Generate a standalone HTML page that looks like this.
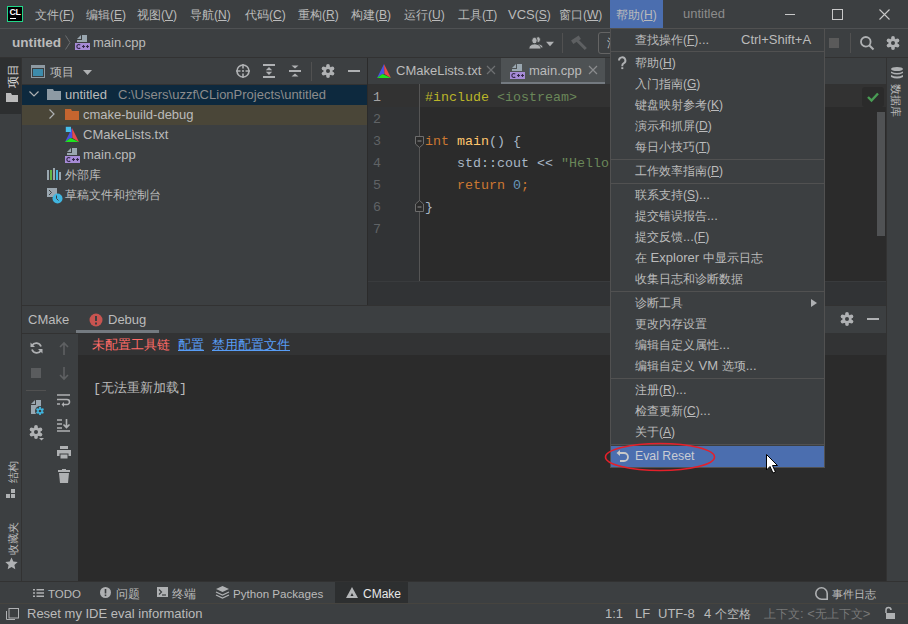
<!DOCTYPE html>
<html><head><meta charset="utf-8">
<style>
*{margin:0;padding:0;box-sizing:border-box}
html,body{width:908px;height:624px;overflow:hidden;background:#3c3f41}
body{position:relative;font-family:"Liberation Sans",sans-serif;font-size:13px;color:#bbbbbb}
.a{position:absolute}
.t{position:absolute;white-space:pre;line-height:16px}
i.k{font-style:normal;font-size:12px}
.m{font-family:"Liberation Mono",monospace;font-size:13.33px}
u{text-decoration:underline;text-underline-offset:1px}
s{text-decoration:none;font-size:12px}
.k13 i.k{font-size:13px}
.k11 i.k{font-size:11px}
svg{position:absolute;overflow:visible}
</style></head><body>
<svg width="0" height="0" style="position:absolute"><defs><g id="gear"><circle cx="7" cy="7" r="4.7"/><circle cx="7" cy="1.9" r="1.9"/><circle cx="11.4" cy="4.45" r="1.9"/><circle cx="11.4" cy="9.55" r="1.9"/><circle cx="7" cy="12.1" r="1.9"/><circle cx="2.6" cy="9.55" r="1.9"/><circle cx="2.6" cy="4.45" r="1.9"/></g><symbol id="cpp" viewBox="0 0 16 15"><path d="M7 0H12V7H2V5H7Z" fill="#9aa7b0"/><path d="M2 4L6 0V4Z" fill="#9aa7b0"/><rect x="0" y="8" width="15" height="7" fill="#a68bd7"/><path d="M5.2 10.2A1.9 2 0 1 0 5.2 12.8" stroke="#35294a" stroke-width="1.1" fill="none"/><path d="M7 11.5H10M8.5 10V13M11 11.5H14M12.5 10V13" stroke="#35294a" stroke-width="1.1"/></symbol><symbol id="cmk" viewBox="0 0 16 16"><path d="M7 2L0 16L5.5 12L7.5 12Z" fill="#4a52e0"/><path d="M7 2L7.5 12L14 16Z" fill="#e74a4a"/><path d="M0 16L5.5 12L14 16Z" fill="#1ee41e"/></symbol></defs></svg>

<!-- ===== title bar ===== -->
<div class="a" style="left:0;top:0;width:908px;height:28px;background:#3c3f41"></div>
<div class="a" style="left:0;top:28px;width:908px;height:1px;background:#4f5153"></div>
<!-- CL logo -->
<div class="a" style="left:7px;top:6px;width:16px;height:16px;background:#000;border:1px solid #21d789"></div>
<div class="t" style="left:9.5px;top:6.5px;font-size:8.8px;font-weight:bold;color:#fff;line-height:10px;letter-spacing:-0.4px">CL</div>
<div class="a" style="left:10px;top:18px;width:6px;height:1px;background:#fff"></div>
<!-- menus -->
<div class="t" style="left:35px;top:7px"><i class="k">文件</i><s>(<u>F</u>)</s></div>
<div class="t" style="left:86px;top:7px"><i class="k">编辑</i><s>(<u>E</u>)</s></div>
<div class="t" style="left:137px;top:7px"><i class="k">视图</i><s>(<u>V</u>)</s></div>
<div class="t" style="left:190px;top:7px"><i class="k">导航</i><s>(<u>N</u>)</s></div>
<div class="t" style="left:245px;top:7px"><i class="k">代码</i><s>(<u>C</u>)</s></div>
<div class="t" style="left:298px;top:7px"><i class="k">重构</i><s>(<u>R</u>)</s></div>
<div class="t" style="left:351px;top:7px"><i class="k">构建</i><s>(<u>B</u>)</s></div>
<div class="t" style="left:404px;top:7px"><i class="k">运行</i><s>(<u>U</u>)</s></div>
<div class="t" style="left:458px;top:7px"><i class="k">工具</i><s>(<u>T</u>)</s></div>
<div class="t" style="left:508px;top:7px">VCS<s>(<u>S</u>)</s></div>
<div class="t" style="left:559px;top:7px"><i class="k">窗口</i><s>(<u>W</u>)</s></div>
<div class="a" style="left:610px;top:0;width:53px;height:28px;background:#4b6eaf"></div>
<div class="t" style="left:616px;top:7px"><i class="k">帮助</i><s>(<u>H</u>)</s></div>
<div class="t" style="left:683px;top:6px;color:#8c8c8c">untitled</div>
<!-- window controls -->
<div class="a" style="left:785px;top:14px;width:10px;height:1px;background:#c8c8c8"></div>
<div class="a" style="left:832px;top:9px;width:11px;height:11px;border:1px solid #c8c8c8"></div>
<svg style="left:879px;top:9px" width="11" height="11"><path d="M0.5 0.5L10.5 10.5M10.5 0.5L0.5 10.5" stroke="#c8c8c8" stroke-width="1.1"/></svg>

<!-- ===== nav toolbar ===== -->
<div class="a" style="left:0;top:57px;width:908px;height:1px;background:#323232"></div>
<div class="t" style="left:12px;top:34px;font-weight:bold;font-size:13.6px;line-height:18px">untitled</div>
<svg style="left:65px;top:35px" width="6" height="15"><path d="M0.5 0.5L5 7.5L0.5 14.5" stroke="#6a6c6e" fill="none"/></svg>
<!-- cpp icon nav -->
<svg style="left:75px;top:35px" width="16" height="15"><use href="#cpp"/></svg>
<div class="t" style="left:93px;top:35px">main.cpp</div>
<!-- right toolbar icons -->
<svg style="left:528px;top:36px" width="28" height="14"><g fill="#afb1b3" stroke="#3c3f41" stroke-width="0.9"><ellipse cx="10.2" cy="3.6" rx="2.2" ry="2.9"/><path d="M9 8C12.5 7.8 15 9.5 15.2 11.8L12 12Z"/><ellipse cx="6.5" cy="4.6" rx="2.7" ry="3.3"/><path d="M0.8 13C0.8 9.6 3.4 7.9 6.6 7.9S13 9.6 13 13Z"/></g><path d="M18 5.8H26L22 10.2Z" fill="#afb1b3"/></svg>
<div class="a" style="left:562px;top:33px;width:1px;height:20px;background:#515151"></div>
<svg style="left:570px;top:35px" width="17" height="16"><path d="M2.2 7.2L9.8 2.2" stroke="#5e6062" stroke-width="4.2"/><path d="M6.8 5L15.8 14" stroke="#5e6062" stroke-width="3"/></svg>
<div class="a" style="left:598px;top:32px;width:30px;height:22px;border:1px solid #646464;border-radius:3px"></div>
<div class="t" style="left:607px;top:35px;color:#bbb"><i class="k">添</i></div>
<div class="a" style="left:829px;top:38px;width:10px;height:10px;background:#5a5a5a"></div>
<div class="a" style="left:850px;top:33px;width:1px;height:20px;background:#515151"></div>
<svg style="left:860px;top:36px" width="15" height="14"><circle cx="5.8" cy="5.8" r="4.8" fill="none" stroke="#afb1b3" stroke-width="1.8"/><path d="M9.2 9.2L13.5 13.5" stroke="#afb1b3" stroke-width="2"/></svg>
<svg style="left:886px;top:36px" width="14" height="14"><use href="#gear" fill="#afb1b3"/><circle cx="7" cy="7" r="2" fill="#3c3f41"/></svg>

<!-- ===== left stripe ===== -->
<div class="a" style="left:0;top:58px;width:21px;height:523px;background:#3c3f41"></div>
<div class="a" style="left:21px;top:58px;width:1px;height:523px;background:#323232"></div>
<div class="a" style="left:0;top:58px;width:21px;height:56px;background:#2d2f30"></div>
<div class="t" style="left:0.5px;top:68px;width:24px;height:16px;text-align:center;transform:rotate(-90deg);color:#dfdfdf"><i class="k">项目</i></div>
<svg style="left:6px;top:93px" width="12" height="9"><path d="M0 0H5L6 2H12V9H0Z" fill="#bbbbbb"/></svg>
<div class="t k11" style="left:0.5px;top:463.5px;width:24px;height:16px;text-align:center;transform:rotate(-90deg)"><i class="k">结构</i></div>
<svg style="left:6px;top:489px" width="11" height="10"><rect x="5" y="0" width="4" height="4" fill="#afb1b3"/><rect x="0" y="5" width="4" height="4" fill="#afb1b3"/><rect x="5" y="5" width="4" height="4" fill="#afb1b3"/></svg>
<div class="t k11" style="left:-5.5px;top:529.5px;width:36px;height:16px;text-align:center;transform:rotate(-90deg)"><i class="k">收藏夹</i></div>
<svg style="left:5px;top:557px" width="13" height="13"><path d="M6.5 0.5L8.3 4.6L12.7 5L9.4 7.9L10.3 12.3L6.5 10L2.7 12.3L3.6 7.9L0.3 5L4.7 4.6Z" fill="#afb1b3"/></svg>

<!-- ===== project panel ===== -->
<div class="a" style="left:22px;top:58px;width:345px;height:247px;background:#3c3f41"></div>
<svg style="left:31px;top:65px" width="14" height="13"><rect x="0.5" y="0.5" width="13" height="12" fill="#3c3f41" stroke="#8e9aa3"/><rect x="0" y="0" width="14" height="3" fill="#8e9aa3"/><rect x="2" y="4" width="10" height="7" fill="#3d8bab"/></svg>
<div class="t" style="left:50px;top:64px"><i class="k">项目</i></div>
<svg style="left:83px;top:70px" width="9" height="6"><path d="M0 0H9L4.5 5Z" fill="#afb1b3"/></svg>
<svg style="left:236px;top:64px" width="14" height="14"><circle cx="7" cy="7" r="6" fill="none" stroke="#afb1b3" stroke-width="1.6"/><path d="M7 0V4.5M7 9.5V14M0 7H4.5M9.5 7H14" stroke="#afb1b3" stroke-width="1.6"/><circle cx="7" cy="7" r="1.1" fill="#afb1b3"/></svg>
<svg style="left:263px;top:64px" width="12" height="14"><path d="M0 1H12M0 13H12" stroke="#afb1b3" stroke-width="2"/><path d="M2.8 6.2L6 3L9.2 6.2ZM2.8 7.8L6 11L9.2 7.8Z" fill="#afb1b3"/></svg>
<svg style="left:289px;top:65px" width="12" height="12"><path d="M0 6H12" stroke="#afb1b3" stroke-width="2"/><path d="M2.5 0.5L6 3.5L9.5 0.5ZM2.5 11.5L6 8.5L9.5 11.5Z" fill="#afb1b3"/></svg>
<div class="a" style="left:311px;top:62px;width:1px;height:19px;background:#515151"></div>
<svg style="left:321px;top:64px" width="14" height="14"><use href="#gear" fill="#afb1b3"/><circle cx="7" cy="7" r="2" fill="#3c3f41"/></svg>
<div class="a" style="left:348px;top:70px;width:12px;height:2px;background:#afb1b3"></div>

<!-- tree -->
<div class="a" style="left:22px;top:85px;width:345px;height:20px;background:#0d293e"></div>
<div class="a" style="left:22px;top:105px;width:345px;height:20px;background:#4a4638"></div>
<svg style="left:29px;top:91px" width="10" height="6"><path d="M0.5 0.5L5 5L9.5 0.5" stroke="#afb1b3" fill="none" stroke-width="1.2"/></svg>
<svg style="left:47px;top:89px" width="14" height="11"><path d="M0 0H6L7 2H14V11H0Z" fill="#8d9aa4"/></svg>
<div class="t" style="left:65px;top:87px">untitled</div>
<div class="t" style="left:118px;top:87px;color:#8c8c8c">C:\Users\uzzf\CLionProjects\untitled</div>
<svg style="left:49px;top:109px" width="6" height="10"><path d="M0.5 0.5L5 5L0.5 9.5" stroke="#afb1b3" fill="none" stroke-width="1.2"/></svg>
<svg style="left:65px;top:109px" width="14" height="11"><path d="M0 0H6L7 2H14V11H0Z" fill="#c5652f"/></svg>
<div class="t" style="left:83px;top:107px">cmake-build-debug</div>
<svg style="left:65px;top:126px" width="16" height="16"><use href="#cmk"/><rect x="0.8" y="0.8" width="5.2" height="5.2" fill="#47bfea"/></svg>
<div class="t" style="left:83px;top:127px">CMakeLists.txt</div>
<svg style="left:65px;top:148px" width="16" height="15"><use href="#cpp"/></svg>
<div class="t" style="left:83px;top:147px">main.cpp</div>
<svg style="left:47px;top:168px" width="14" height="12"><rect x="0" y="2" width="2" height="10" fill="#9aa7b0"/><rect x="3" y="2" width="2" height="10" fill="#62b543"/><rect x="6" y="0" width="2" height="12" fill="#9aa7b0"/><rect x="9" y="2" width="2" height="10" fill="#40b6e0"/><rect x="12" y="4" width="2" height="8" fill="#9aa7b0"/></svg>
<div class="t" style="left:65px;top:167px"><i class="k">外部库</i></div>
<svg style="left:47px;top:188px" width="16" height="16"><rect x="0" y="0" width="10" height="9" fill="#9aa7b0"/><path d="M2 2L4.5 4.5L2 7" stroke="#3c3f41" fill="none" stroke-width="1"/><circle cx="10.5" cy="10.5" r="5" fill="#40b6e0"/><path d="M9.5 7.5V10.5L11.5 12.5" stroke="#3c3f41" fill="none" stroke-width="1"/></svg>
<div class="t" style="left:65px;top:187px"><i class="k">草稿文件和控制台</i></div>
<div class="a" style="left:367px;top:58px;width:1px;height:248px;background:#2b2b2b"></div>

<!-- ===== editor ===== -->
<div class="a" style="left:368px;top:58px;width:518px;height:26px;background:#3c3f41"></div>
<div class="a" style="left:22px;top:84px;width:345px;height:1px;background:#323232"></div>
<svg style="left:377px;top:62px" width="16" height="16"><use href="#cmk"/></svg>
<div class="t" style="left:396px;top:63px">CMakeLists.txt</div>
<svg style="left:487px;top:66px" width="8" height="8"><path d="M0 0L8 8M8 0L0 8" stroke="#6e7072" stroke-width="1.2"/></svg>
<div class="a" style="left:501px;top:58px;width:104px;height:26px;background:#4e5254"></div>
<div class="a" style="left:501px;top:82px;width:104px;height:3px;background:#747a80"></div>
<svg style="left:510px;top:64px" width="16" height="15"><use href="#cpp"/></svg>
<div class="t" style="left:529px;top:63px">main.cpp</div>
<svg style="left:589px;top:66px" width="8" height="8"><path d="M0 0L8 8M8 0L0 8" stroke="#8a8c8e" stroke-width="1.2"/></svg>

<div class="a" style="left:368px;top:84px;width:518px;height:197px;background:#2b2b2b"></div>
<div class="a" style="left:368px;top:84px;width:51px;height:197px;background:#313335"></div>
<div class="a" style="left:368px;top:84px;width:518px;height:23px;background:#323232"></div>
<div class="a" style="left:419px;top:84px;width:1px;height:197px;background:#555555"></div>
<div class="a" style="left:862px;top:87px;width:22px;height:20px;background:#2b2b2b;border-radius:3px"></div>
<svg style="left:867px;top:92px" width="12" height="10"><path d="M1 5L4.5 8.5L11 1.5" stroke="#499c54" stroke-width="2.4" fill="none"/></svg>
<div class="a" style="left:877px;top:112px;width:8px;height:124px;background:#505254"></div>
<div class="m t" style="left:373px;top:90px;line-height:16px;color:#a4a3a3">1</div>
<div class="m t" style="left:373px;top:112px;color:#606366">2</div>
<div class="m t" style="left:373px;top:134px;color:#606366">3</div>
<div class="m t" style="left:373px;top:156px;color:#606366">4</div>
<div class="m t" style="left:373px;top:178px;color:#606366">5</div>
<div class="m t" style="left:373px;top:200px;color:#606366">6</div>
<div class="m t" style="left:373px;top:222px;color:#606366">7</div>
<svg style="left:415px;top:136px" width="9" height="12"><path d="M0.5 0.5H8.5V8L4.5 11.5L0.5 8Z" fill="#2b2b2b" stroke="#6e6e6e"/><path d="M2.5 5H6.5" stroke="#8e8e8e"/></svg>
<svg style="left:415px;top:200px" width="9" height="12"><path d="M0.5 11.5H8.5V4L4.5 0.5L0.5 4Z" fill="#2b2b2b" stroke="#6e6e6e"/><path d="M2.5 7H6.5" stroke="#8e8e8e"/></svg>
<div class="m t" style="left:425px;top:90px;color:#bbb529">#include <span style="color:#6a8759">&lt;iostream&gt;</span></div>
<div class="m t" style="left:425px;top:134px;color:#a9b7c6"><span style="color:#cc7832">int</span> <span style="color:#ffc66d">main</span>() {</div>
<div class="m t" style="left:457px;top:156px;color:#a9b7c6">std::cout &lt;&lt; <span style="color:#6a8759">"Hello</span></div>
<div class="m t" style="left:457px;top:178px;color:#cc7832">return <span style="color:#6897bb">0</span>;</div>
<div class="m t" style="left:425px;top:200px;color:#a9b7c6">}</div>

<div class="a" style="left:368px;top:281px;width:518px;height:25px;background:#313335;border-top:1px solid #393b3d"></div>

<!-- ===== right stripe ===== -->
<div class="a" style="left:886px;top:58px;width:1px;height:523px;background:#323232"></div>
<svg style="left:891px;top:67px" width="12" height="12"><ellipse cx="6" cy="2" rx="6" ry="2" fill="#afb1b3"/><path d="M0 4.5Q6 7.5 12 4.5V6Q6 9 0 6Z M0 8Q6 11 12 8V10Q6 13 0 10Z" fill="#afb1b3"/></svg>
<div class="t k11" style="left:878px;top:91.5px;width:36px;height:16px;text-align:center;transform:rotate(90deg)"><i class="k">数据库</i></div>

<!-- ===== bottom panel ===== -->
<div class="a" style="left:22px;top:305px;width:864px;height:1px;background:#323232"></div>
<div class="a" style="left:22px;top:306px;width:864px;height:27px;background:#3c3f41"></div>
<div class="t" style="left:28px;top:312px">CMake</div>
<svg style="left:89px;top:313px" width="14" height="14"><circle cx="7" cy="7" r="6.5" fill="#c75450"/><rect x="6" y="3" width="2" height="5" fill="#3c3f41"/><rect x="6" y="9.5" width="2" height="2" fill="#3c3f41"/></svg>
<div class="t" style="left:108px;top:312px">Debug</div>
<div class="a" style="left:76px;top:330px;width:83px;height:3px;background:#747a80"></div>
<svg style="left:840px;top:312px" width="14" height="14"><use href="#gear" fill="#afb1b3"/><circle cx="7" cy="7" r="2" fill="#3c3f41"/></svg>
<div class="a" style="left:867px;top:318px;width:12px;height:2px;background:#afb1b3"></div>

<div class="a" style="left:22px;top:333px;width:56px;height:248px;background:#3c3f41;border-top:1px solid #323232"></div>
<div class="a" style="left:78px;top:333px;width:808px;height:248px;background:#2b2b2b"></div>
<div class="a" style="left:78px;top:333px;width:808px;height:22px;background:#323334"></div>
<!-- toolbar icons col1 -->
<svg style="left:30px;top:342px" width="13" height="12"><path d="M11 4.5A5 5 0 0 0 2 3.5M2 7.5A5 5 0 0 0 11 8.5" stroke="#afb1b3" stroke-width="1.8" fill="none"/><path d="M0.5 0.5V5H5Z" fill="#afb1b3"/><path d="M12.5 11.5V7H8Z" fill="#afb1b3"/></svg>
<div class="a" style="left:31px;top:368px;width:10px;height:10px;background:#5a5c5e"></div>
<div class="a" style="left:26px;top:390px;width:20px;height:1px;background:#515151"></div>
<svg style="left:30px;top:400px" width="16" height="16"><path d="M6 0H11V14H1V5H6Z" fill="#9aa7b0"/><path d="M1 4L5 0V4Z" fill="#9aa7b0"/><circle cx="10" cy="11" r="5" fill="#3c3f41"/><use href="#gear" fill="#40b6e0" transform="translate(5.8 6.8) scale(0.6)"/><circle cx="10" cy="11" r="1.3" fill="#3c3f41"/></svg>
<svg style="left:29px;top:425px" width="16" height="16"><use href="#gear" fill="#afb1b3"/><circle cx="7" cy="7" r="2" fill="#3c3f41"/><path d="M10 13H15L12.5 15.5Z" fill="#afb1b3"/></svg>
<!-- col2 -->
<svg style="left:59px;top:342px" width="10" height="13"><path d="M5 1V13M1 5L5 1L9 5" stroke="#5e6062" stroke-width="1.6" fill="none"/></svg>
<svg style="left:59px;top:367px" width="10" height="13"><path d="M5 0V12M1 8L5 12L9 8" stroke="#5e6062" stroke-width="1.6" fill="none"/></svg>
<svg style="left:57px;top:394px" width="14" height="13"><path d="M0 1H13M0 5.5H10A2.5 2.5 0 0 1 10 10.5H6M0 10H3" stroke="#afb1b3" stroke-width="1.6" fill="none"/><path d="M7 8L4.5 10.5L7 13Z" fill="#afb1b3"/></svg>
<svg style="left:57px;top:419px" width="14" height="13"><path d="M0 1H5M0 5H5M0 9H5M0 12H13M9.5 0V8M6.5 5.5L9.5 8.5L12.5 5.5" stroke="#afb1b3" stroke-width="1.6" fill="none"/></svg>
<svg style="left:57px;top:446px" width="14" height="13"><rect x="3" y="0" width="8" height="3" fill="#afb1b3"/><rect x="0" y="4" width="14" height="6" fill="#afb1b3"/><rect x="3" y="8" width="8" height="5" fill="#afb1b3" stroke="#3c3f41"/></svg>
<svg style="left:58px;top:469px" width="12" height="14"><rect x="0" y="1" width="12" height="2" fill="#afb1b3"/><rect x="4" y="0" width="4" height="2" fill="#afb1b3"/><path d="M1 4H11L10 14H2Z" fill="#afb1b3"/></svg>

<div class="t k13" style="left:92px;top:337px;color:#ff6b68"><i class="k">未配置工具链</i></div>
<div class="t k13" style="left:178px;top:337px;color:#589df6"><u><i class="k">配置</i></u></div>
<div class="t k13" style="left:212px;top:337px;color:#589df6"><u><i class="k">禁用配置文件</i></u></div>
<div class="t m k13" style="left:93px;top:381px;color:#bbbbbb">[<i class="k">无法重新加载</i>]</div>

<!-- ===== bottom tool strip ===== -->
<div class="a" style="left:0;top:581px;width:908px;height:1px;background:#323232"></div>
<div class="a" style="left:0;top:582px;width:908px;height:21px;background:#3c3f41"></div>
<svg style="left:33px;top:589px" width="11" height="8"><path d="M0 0.75H2M3.5 0.75H11M0 4H2M3.5 4H11M0 7.25H2M3.5 7.25H11" stroke="#afb1b3" stroke-width="1.5"/></svg>
<div class="t" style="left:48px;top:586px;font-size:11.5px">TODO</div>
<svg style="left:100px;top:587px" width="11" height="11"><circle cx="5.5" cy="5.5" r="5.5" fill="#afb1b3"/><rect x="4.7" y="2" width="1.6" height="4.5" fill="#3c3f41"/><rect x="4.7" y="7.5" width="1.6" height="1.6" fill="#3c3f41"/></svg>
<div class="t" style="left:116px;top:586px"><i class="k">问题</i></div>
<svg style="left:157px;top:587px" width="11" height="11"><rect x="0" y="0" width="11" height="10" fill="#afb1b3"/><path d="M2 2.5L4.5 5L2 7.5" stroke="#3c3f41" fill="none" stroke-width="1.2"/><path d="M5 8H9" stroke="#3c3f41" stroke-width="1.2"/></svg>
<div class="t" style="left:172px;top:586px"><i class="k">终端</i></div>
<svg style="left:216px;top:586px" width="13" height="13"><path d="M6.5 0L13 3L6.5 6L0 3Z" fill="#afb1b3"/><path d="M0 6L6.5 9L13 6M0 9L6.5 12L13 9" stroke="#afb1b3" stroke-width="1.3" fill="none"/></svg>
<div class="t" style="left:233px;top:586px;font-size:11.6px">Python Packages</div>
<div class="a" style="left:335px;top:582px;width:73px;height:21px;background:#2d2f30"></div>
<svg style="left:346px;top:587px" width="12" height="11"><path d="M6 0L12 11H0Z" fill="#b4b6b8"/><path d="M6 6L7.5 9H4.5Z" fill="#2d2f30"/></svg>
<div class="t" style="left:363px;top:586px;font-size:12px;color:#e8e8e8">CMake</div>
<svg style="left:815px;top:587px" width="14" height="14"><path d="M12.2 6.5A5.7 5.7 0 1 0 6.5 12.2H12.2Z" fill="none" stroke="#afb1b3" stroke-width="1.6"/></svg>
<div class="t k11" style="left:832px;top:586px"><i class="k">事件日志</i></div>

<!-- ===== status bar ===== -->
<div class="a" style="left:0;top:603px;width:908px;height:1px;background:#46443f"></div>
<svg style="left:6px;top:608px" width="13" height="13"><rect x="3" y="0.5" width="9.5" height="9.5" fill="none" stroke="#afb1b3"/><path d="M0.5 3V11.5H9" fill="none" stroke="#afb1b3"/></svg>
<div class="t" style="left:27px;top:606px">Reset my IDE eval information</div>
<div class="t" style="left:605px;top:606px">1:1</div>
<div class="t" style="left:635px;top:606px">LF</div>
<div class="t" style="left:658px;top:606px">UTF-8</div>
<div class="t" style="left:704px;top:606px">4 <i class="k">个空格</i></div>
<div class="t" style="left:764px;top:606px;color:#787878"><i class="k">上下文</i>: &lt;<i class="k">无上下文</i>&gt;</div>
<svg style="left:882px;top:607px" width="13" height="12"><path d="M4 6V3A2.5 2.5 0 0 1 9 3" stroke="#afb1b3" stroke-width="1.5" fill="none"/><rect x="4" y="6" width="9" height="6" fill="#afb1b3"/></svg>

<!-- ===== help menu popup ===== -->
<div class="a" style="left:610px;top:28px;width:215px;height:440px;background:#3c3f41;border:1px solid #515151"></div>
<div class="t" style="left:635px;top:32px"><i class="k">查找操作</i><s>(<u>F</u>)</s>...</div>
<div class="t" style="left:741px;top:32px">Ctrl+Shift+A</div>
<div class="a" style="left:611px;top:51px;width:213px;height:1px;background:#515151"></div>
<svg style="left:618px;top:57px" width="9" height="12"><path d="M1 3.6A3.2 3.2 0 1 1 5.6 6.4Q4.3 7.2 4.3 8.6V9.3" stroke="#afb1b3" stroke-width="1.9" fill="none"/><rect x="3.3" y="10.2" width="2" height="1.9" fill="#afb1b3"/></svg>
<div class="t" style="left:635px;top:55px"><i class="k">帮助</i><s>(<u>H</u>)</s></div>
<div class="t" style="left:635px;top:76px"><i class="k">入门指南</i><s>(<u>G</u>)</s></div>
<div class="t" style="left:635px;top:97px"><i class="k">键盘映射参考</i><s>(<u>K</u>)</s></div>
<div class="t" style="left:635px;top:118px"><i class="k">演示和抓屏</i><s>(<u>D</u>)</s></div>
<div class="t" style="left:635px;top:139px"><i class="k">每日小技巧</i><s>(<u>T</u>)</s></div>
<div class="a" style="left:611px;top:159px;width:213px;height:1px;background:#515151"></div>
<div class="t" style="left:635px;top:163px"><i class="k">工作效率指南</i><s>(<u>P</u>)</s></div>
<div class="a" style="left:611px;top:183px;width:213px;height:1px;background:#515151"></div>
<div class="t" style="left:635px;top:187px"><i class="k">联系支持</i><s>(<u>S</u>)</s>...</div>
<div class="t" style="left:635px;top:208px"><i class="k">提交错误报告</i>...</div>
<div class="t" style="left:635px;top:229px"><i class="k">提交反馈</i>...<s>(<u>F</u>)</s></div>
<div class="t" style="left:635px;top:250px"><i class="k">在</i> Explorer <i class="k">中显示日志</i></div>
<div class="t" style="left:635px;top:271px"><i class="k">收集日志和诊断数据</i></div>
<div class="a" style="left:611px;top:291px;width:213px;height:1px;background:#515151"></div>
<div class="t" style="left:635px;top:295px"><i class="k">诊断工具</i></div>
<svg style="left:811px;top:299px" width="6" height="8"><path d="M0 0L6 4L0 8Z" fill="#afb1b3"/></svg>
<div class="t" style="left:635px;top:316px"><i class="k">更改内存设置</i></div>
<div class="t" style="left:635px;top:337px"><i class="k">编辑自定义属性</i>...</div>
<div class="t" style="left:635px;top:358px"><i class="k">编辑自定义</i> VM <i class="k">选项</i>...</div>
<div class="a" style="left:611px;top:378px;width:213px;height:1px;background:#515151"></div>
<div class="t" style="left:635px;top:382px"><i class="k">注册</i><s>(<u>R</u>)</s>...</div>
<div class="t" style="left:635px;top:403px"><i class="k">检查更新</i><s>(<u>C</u>)</s>...</div>
<div class="t" style="left:635px;top:424px"><i class="k">关于</i><s>(<u>A</u>)</s></div>
<div class="a" style="left:611px;top:444px;width:213px;height:1px;background:#515151"></div>
<div class="a" style="left:611px;top:446px;width:213px;height:21px;background:#4b6eaf"></div>
<svg style="left:616px;top:450px" width="13" height="12"><path d="M3 3H8A3.6 3.6 0 0 1 8 11H4" stroke="#c8c8c8" stroke-width="1.8" fill="none"/><path d="M0.5 3L4 0V6Z" fill="#c8c8c8"/></svg>
<div class="t" style="left:635px;top:448px;color:#c9ccd3;font-size:12.3px">Eval Reset</div>
<svg style="left:604px;top:442px" width="112" height="30"><ellipse cx="56" cy="15" rx="54.5" ry="13.5" fill="none" stroke="#e5202a" stroke-width="1.6"/></svg>
<!-- cursor -->
<svg style="left:766px;top:454px" width="13" height="20"><path d="M0.5 0.5V16L4 12.5L7 19L9.5 18L6.5 11.5H11.5Z" fill="#fff" stroke="#000" stroke-width="1"/></svg>

</body></html>
